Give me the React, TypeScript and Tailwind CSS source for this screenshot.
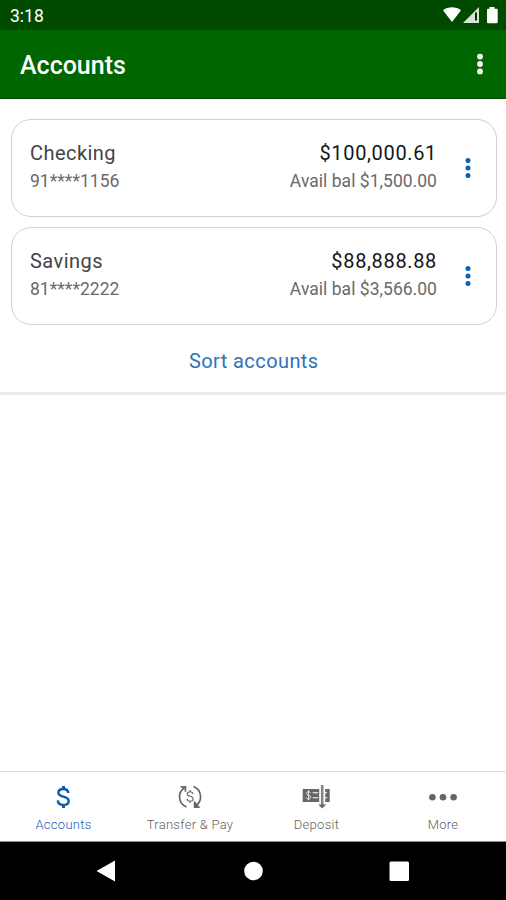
import type { ReactNode } from "react";

interface Account {
  name: string;
  mask: string;
  balance: string;
  available: string;
}

const accounts: Account[] = [
  { name: "Checking", mask: "91****1156", balance: "$100,000.61", available: "$1,500.00" },
  { name: "Savings", mask: "81****2222", balance: "$88,888.88", available: "$3,566.00" },
];

function MoreDots({ className, radius }: { className: string; radius: number }) {
  return (
    <svg viewBox="0 0 6 22" width="6" height="22" fill="currentColor" className={className}>
      <circle cx="3" cy="3.6" r={radius} />
      <circle cx="3" cy="11" r={radius} />
      <circle cx="3" cy="18.4" r={radius} />
    </svg>
  );
}

function StatusBar() {
  return (
    <div className="flex h-[30px] items-center justify-between bg-[#004a00] pl-[10px] pr-[7px] text-white">
      <span className="mt-[3px] text-[17.5px] leading-none">3:18</span>
      <svg viewBox="0 0 58 20" width="58" height="20" fill="currentColor" className="mt-px">
        <path d="M2 4.2C7.3 0.4 14.7 0.4 20 4.2L11 16Z" />
        <path d="M38 1v16H22Z" fillOpacity="0.85" />
        <path d="M34 6.5h2v8h-2z" fill="#003000" />
        <path d="M48.5 1h5v1.8h2.2a1 1 0 0 1 1 1V16a1.3 1.3 0 0 1-1.3 1.3h-8A1.3 1.3 0 0 1 46 16V3.8a1 1 0 0 1 1-1h1.5Z" />
      </svg>
    </div>
  );
}

function AccountCard({ account }: { account: Account }) {
  return (
    <div className="flex h-[98px] items-start rounded-[20px] border-[1.5px] border-[#d0d0d0] bg-white pl-[18.5px] pr-[25px] pt-[21px]">
      <div className="flex-1">
        <div className="text-[20px] leading-[24px] tracking-[0.45px] text-[#444]">{account.name}</div>
        <div className="mt-[4px] text-[17.5px] leading-[24px] tracking-[0.03px] text-[#6a6a6a]">{account.mask}</div>
      </div>
      <div className="text-right">
        <div className="text-[20px] leading-[24px] tracking-[0.65px] text-[#161616]">{account.balance}</div>
        <div className="mt-[4px] text-[17.5px] leading-[24px] tracking-[0.03px] text-[#6a6a6a]">
          Avail bal {account.available}
        </div>
      </div>
      <button className="ml-[28px] mt-[16px]">
        <MoreDots className="text-[#0b62b0]" radius={2.5} />
      </button>
    </div>
  );
}

function DollarIcon() {
  return (
    <svg viewBox="0 0 16 24" width="16" height="24" fill="none" stroke="currentColor" strokeWidth="2.4">
      <path d="M13.3 8C13.1 5.4 11.2 4 8.3 4 5.4 4 3.4 5.4 3.4 7.7c0 5.3 10.3 2.7 10.3 8.2 0 2.5-2.1 4-5.3 4-3.5 0-5.5-1.6-5.6-4.5" />
      <path d="M8.5 1v3M8.5 20v3" strokeWidth="3" />
    </svg>
  );
}

function TransferIcon() {
  return (
    <svg viewBox="0 0 24 24" width="24" height="24" fill="none" stroke="currentColor" strokeWidth="1.7">
      <path d="M8.5 22C-0.2 18.2-0.6 7.5 6.5 2.7" />
      <path d="M2.6 1.8h4.8v5" />
      <path d="M15.5 1.5c8.8 3.7 9.3 14.5 2 19.5" />
      <path d="M16.6 16.8v5.2h4.6" />
      <path d="M17 22v-4l3.5 4Z" fill="currentColor" />
      <path
        d="M15 8.8c-.2-1.400-1.300-2.100-2.900-2.100-1.700 0-2.800.8-2.800 2.200 0 3.200 5.900 1.600 5.900 4.900 0 1.500-1.200 2.400-3 2.400-1.900 0-3.100-.9-3.200-2.500M12.100 5v1.700M12.100 16.200V18"
        strokeWidth="1.1"
      />
    </svg>
  );
}

function DepositIcon() {
  return (
    <svg viewBox="-0.7 0 28 24" width="28" height="24" fill="none" stroke="currentColor">
      <path d="M0 4h16.5v13H0Z" fill="currentColor" stroke="none" />
      <path d="M22.5 4H27v13h-4.5Z" fill="currentColor" stroke="none" />
      <path
        d="M7.800 7.800c-.4-.8-1-1.100-2-1.100-1.200 0-2 .6-2 1.600 0 2.300 4.200 1.500 4.200 3.900 0 1.100-.8 1.800-2.100 1.800-1.300 0-2.100-.6-2.300-1.600M5.800 5.300v10"
        stroke="white"
        strokeWidth="0.8"
      />
      <path d="M10 7.7h5.5M10 12.8h5.5M22 7.7h2.5M22 12.8h2.5" stroke="white" strokeWidth="1.1" />
      <path d="M19.5 0V20" strokeWidth="2.6" strokeOpacity="0.8" />
      <path d="M15.5 19.5h8L19.5 23.5Z" fill="currentColor" stroke="none" />
    </svg>
  );
}

function EllipsisIcon() {
  return (
    <svg viewBox="0 0 28 24" width="28" height="24" fill="currentColor">
      <circle cx="3.4" cy="12.2" r="3.3" />
      <circle cx="14" cy="12.2" r="3.3" />
      <circle cx="24.6" cy="12.2" r="3.3" />
    </svg>
  );
}

interface TabProps {
  label: string;
  active?: boolean;
  children: ReactNode;
}

function Tab({ label, active, children }: TabProps) {
  return (
    <button className={`flex flex-1 flex-col items-center pt-[13px] ${active ? "text-[#0b5cab]" : "text-[#666]"}`}>
      {children}
      <span
        className={`mt-[8px] whitespace-nowrap pl-[0.5px] text-[13px] font-light leading-[16px] tracking-[0.28px] ${
          active ? "text-[#2560b5]" : "text-[#626262]"
        }`}
      >
        {label}
      </span>
    </button>
  );
}

export default function App() {
  return (
    <div className="flex h-[900px] w-[506px] flex-col bg-white font-['Roboto',sans-serif]">
      <StatusBar />
      <header className="flex h-[68.5px] items-center justify-between border-b border-[#004a00] bg-[#006600] pl-[20px] pr-[23.5px] text-white">
        <h1 className="mt-[4px] text-[25px] font-medium leading-none">Accounts</h1>
        <button className="mt-[1px]">
          <MoreDots className="text-white" radius={2.9} />
        </button>
      </header>

      <main className="flex-1">
        <section className="flex h-[296.5px] flex-col gap-[10px] border-b-[3px] border-[#ebebeb] pl-[10.5px] pr-[9px] pt-[20px]">
          {accounts.map((account) => (
            <AccountCard key={account.name} account={account} />
          ))}
          <button className="mt-[14px] self-center text-[20px] leading-[24px] tracking-[0.42px] text-[#2f72b9]">
            Sort accounts
          </button>
        </section>
      </main>

      <nav className="flex h-[71px] border-b border-t-[1.5px] border-b-[#8a8a8a] border-t-[#dcdcdc]">
        <Tab label="Accounts" active>
          <DollarIcon />
        </Tab>
        <Tab label="Transfer & Pay">
          <TransferIcon />
        </Tab>
        <Tab label="Deposit">
          <DepositIcon />
        </Tab>
        <Tab label="More">
          <EllipsisIcon />
        </Tab>
      </nav>

      {/* Android system navigation */}
      <footer className="flex h-[58px] items-center bg-black text-white">
        <svg viewBox="0 0 506 58" width="506" height="58" fill="currentColor">
          <path d="M96.5 29L115 18.5V39.5Z" />
          <circle cx="253.5" cy="29" r="9.3" />
          <rect x="389.5" y="19.5" width="19.5" height="19.5" rx="1.5" />
        </svg>
      </footer>
    </div>
  );
}
